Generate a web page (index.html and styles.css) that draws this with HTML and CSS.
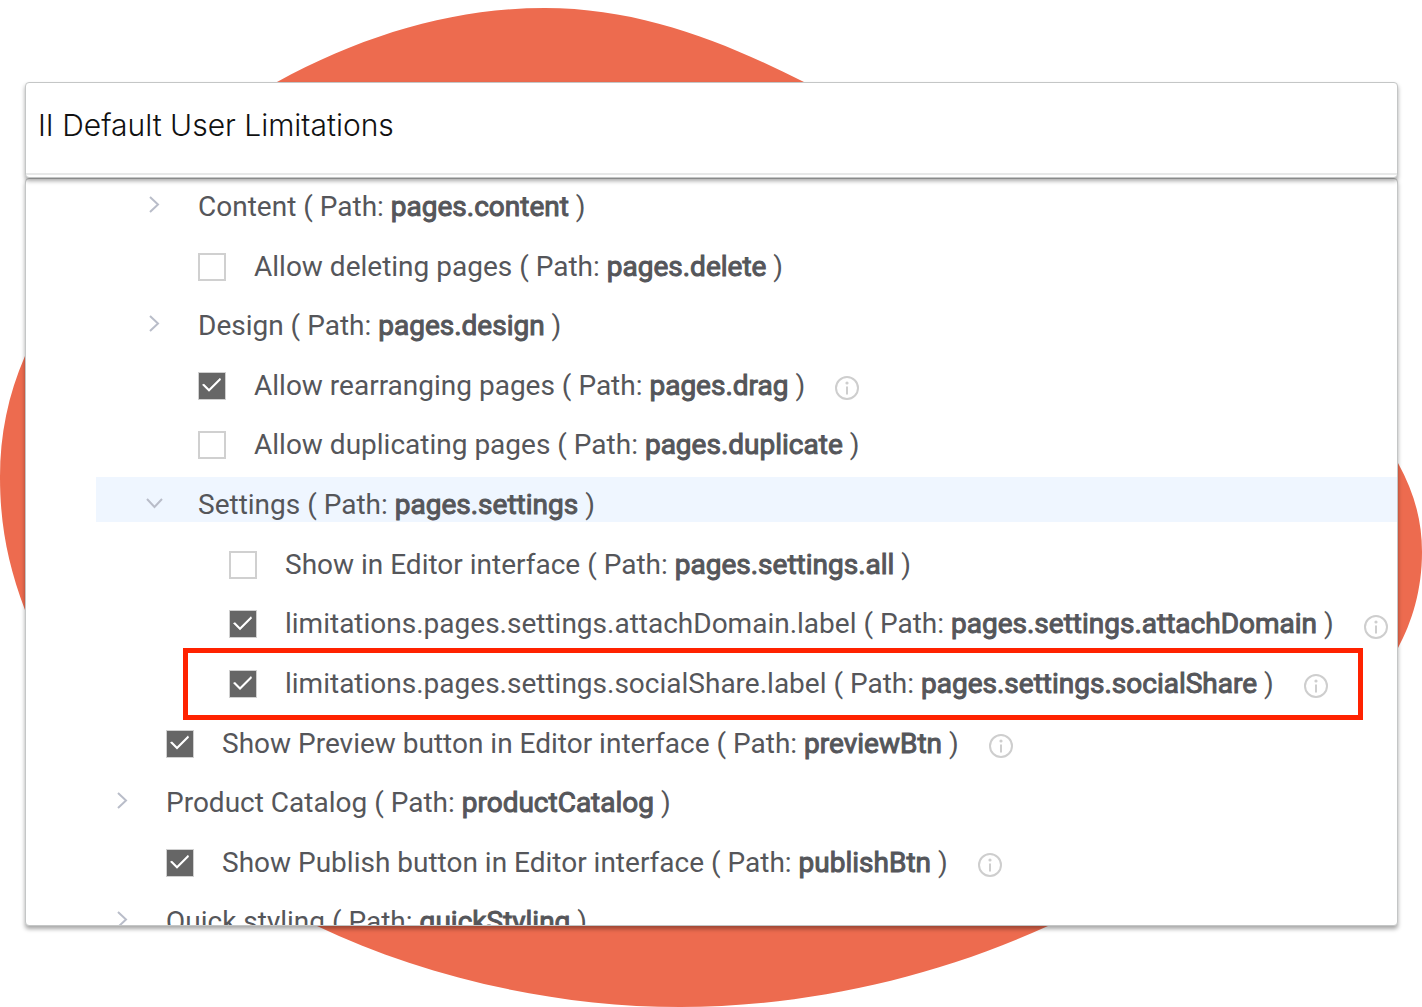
FILE: index.html
```html
<!DOCTYPE html>
<html lang="en">
<head>
  <meta charset="UTF-8" />
  <meta name="viewport" content="width=device-width, initial-scale=1.0"/>
  <title>Default User Limitations</title>
  <link rel="stylesheet" href="styles.css">
</head>
<body>

  <!-- Background shape -->
  <svg class="blob" viewBox="0 0 1422 1007" preserveAspectRatio="none" aria-hidden="true">
    <path d="M545 8C640 8 725 42 804 82C1000 190 1310 300 1398 463C1414 492 1422 520 1422 552C1422 590 1412 622 1398 648C1330 770 1180 860 1048 926C930 980 800 1007 680 1007C550 1007 420 975 317 926C150 850 60 730 25 610C8 565 0 525 0 477C0 435 8 395 25 356C60 250 150 140 277 82C365 34 455 8 545 8Z"/>
  </svg>

  <!-- Icons -->
  <svg class="sprite" aria-hidden="true">
    <symbol id="chevron" viewBox="0 0 28 28">
      <path d="M10 6l8 7.5-8 7.5" fill="none" stroke="currentColor" stroke-width="2"/>
    </symbol>
    <symbol id="info" viewBox="0 0 24 24">
      <circle cx="12" cy="12" r="11" fill="none" stroke="currentColor" stroke-width="2"/>
      <circle cx="12" cy="7" r="1.6" fill="currentColor"/>
      <path d="M12 10.5v8" stroke="currentColor" stroke-width="2"/>
    </symbol>
  </svg>

  <main class="page">
    <header class="panel title-bar">
      <h1>II Default User Limitations</h1>
    </header>

    <section class="panel list-panel">
      <ul class="tree">
        <li class="level-2">
          <div class="row">
            <button class="toggle" aria-label="Expand Content"><svg><use href="#chevron"/></svg></button>
            <span class="label">Content ( Path: <b>pages.content</b> )</span>
          </div>
        </li>
        <li class="level-2">
          <div class="row">
            <input type="checkbox" id="delete">
            <label for="delete">Allow deleting pages ( Path: <b>pages.delete</b> )</label>
          </div>
        </li>
        <li class="level-2">
          <div class="row">
            <button class="toggle" aria-label="Expand Design"><svg><use href="#chevron"/></svg></button>
            <span class="label">Design ( Path: <b>pages.design</b> )</span>
          </div>
        </li>
        <li class="level-2">
          <div class="row">
            <input type="checkbox" id="drag" checked>
            <label for="drag">Allow rearranging pages ( Path: <b>pages.drag</b> )</label>
            <svg class="info"><use href="#info"/></svg>
          </div>
        </li>
        <li class="level-2">
          <div class="row">
            <input type="checkbox" id="duplicate">
            <label for="duplicate">Allow duplicating pages ( Path: <b>pages.duplicate</b> )</label>
          </div>
        </li>
        <li class="level-2">
          <div class="row selected">
            <button class="toggle open" aria-label="Collapse Settings"><svg><use href="#chevron"/></svg></button>
            <span class="label">Settings ( Path: <b>pages.settings</b> )</span>
          </div>
        </li>
        <li class="level-3">
          <div class="row">
            <input type="checkbox" id="all">
            <label for="all">Show in Editor interface ( Path: <b>pages.settings.all</b> )</label>
          </div>
        </li>
        <li class="level-3">
          <div class="row">
            <input type="checkbox" id="attachDomain" checked>
            <label for="attachDomain">limitations.pages.settings.attachDomain.label ( Path: <b>pages.settings.attachDomain</b> )</label>
            <svg class="info"><use href="#info"/></svg>
          </div>
        </li>
        <li class="level-3">
          <div class="row marked">
            <input type="checkbox" id="socialShare" checked>
            <label for="socialShare">limitations.pages.settings.socialShare.label ( Path: <b>pages.settings.socialShare</b> )</label>
            <svg class="info"><use href="#info"/></svg>
          </div>
        </li>
        <li class="level-1">
          <div class="row">
            <input type="checkbox" id="previewBtn" checked>
            <label for="previewBtn">Show Preview button in Editor interface ( Path: <b>previewBtn</b> )</label>
            <svg class="info"><use href="#info"/></svg>
          </div>
        </li>
        <li class="level-1">
          <div class="row">
            <button class="toggle" aria-label="Expand Product Catalog"><svg><use href="#chevron"/></svg></button>
            <span class="label">Product Catalog ( Path: <b>productCatalog</b> )</span>
          </div>
        </li>
        <li class="level-1">
          <div class="row">
            <input type="checkbox" id="publishBtn" checked>
            <label for="publishBtn">Show Publish button in Editor interface ( Path: <b>publishBtn</b> )</label>
            <svg class="info"><use href="#info"/></svg>
          </div>
        </li>
        <li class="level-1">
          <div class="row">
            <button class="toggle" aria-label="Expand Quick styling"><svg><use href="#chevron"/></svg></button>
            <span class="label">Quick styling ( Path: <b>quickStyling</b> )</span>
          </div>
        </li>
      </ul>
    </section>
  </main>

</body>
</html>
```
FILE: styles.css
```css
*, *::before, *::after {
  box-sizing: border-box;
}
body {
  margin: 0;
  background: white;
  color: #55565a;
  font-family: Roboto, Arial, sans-serif;
  font-size: 28px;
}
.blob {
  position: absolute;
  top: 0;
  left: 0;
  width: 100%;
  height: 100vh;
  z-index: -1;
  fill: #ed6b4f;
}
.sprite {
  position: absolute;
  width: 0;
  height: 0;
}
.page {
  display: flex;
  flex-direction: column;
  height: 100vh;
  padding: 82px 24px 81px 25px;
}
.panel {
  background: white;
  border: 1px solid #c4c6c6;
  border-radius: 4px;
  box-shadow: 0 3px 4px rgba(0, 0, 0, 0.35);
}

/* title bar */
.title-bar {
  display: flex;
  flex-direction: column;
  height: 96px;
  padding-bottom: 2px;
  position: relative;
}
.title-bar h1 {
  flex: 1;
  margin: 0;
  padding: 24px 12px 0;
  border-bottom: 2px solid #e8e9e9;
  color: #111;
  font-family: Inter, Roboto, sans-serif;
  font-size: 30px;
  font-weight: 300;
  line-height: 36px;
}

/* tree */
.list-panel {
  flex: 1;
  min-height: 0;
  overflow: hidden;
}
.tree {
  display: grid;
  grid-auto-rows: 1fr;
  height: 775px;
  margin: 0 0 0 70px;
  padding: 0;
  list-style: none;
}
.row {
  display: flex;
  align-items: center;
  height: 45px;
  padding-top: 11px;
  line-height: 36px;
  white-space: nowrap;
}
.level-1 .row {
  padding-left: 70px;
}
.level-2 .row {
  padding-left: 102px;
}
.level-3 .row {
  padding-left: 133px;
}
.selected {
  background: #eff6ff;
}
b {
  font-weight: 400;
  -webkit-text-stroke: 1px currentColor;
}
.toggle {
  width: 28px;
  height: 28px;
  margin: 0 30px 4px -58px;
  padding: 0;
  border: 0;
  background: none;
  color: #b9bdc9;
}
.toggle svg {
  display: block;
  width: 28px;
  height: 28px;
}
.toggle.open svg {
  transform: rotate(90deg);
}
input {
  appearance: none;
  width: 28px;
  height: 28px;
  margin: 0 28px 0 0;
  border: 2px solid #d0d0d0;
  background: white;
}
input:checked {
  border-width: 1px;
  background: #666;
}
input:checked::before {
  content: "";
  display: block;
  height: 26px;
  background: white;
  clip-path: polygon(3px 12px, 5px 11px, 10px 16px, 21px 5px, 22px 7px, 10px 19px);
}
.info {
  width: 24px;
  height: 24px;
  margin: 5px 0 0 30px;
  overflow: visible;
  color: #cecece;
}

/* red frame round the row */
.marked {
  position: relative;
}
.marked::after {
  content: "";
  position: absolute;
  top: -8px;
  left: 87px;
  right: 34px;
  height: 72px;
  border: 5px solid #ff2200;
  pointer-events: none;
}
```
